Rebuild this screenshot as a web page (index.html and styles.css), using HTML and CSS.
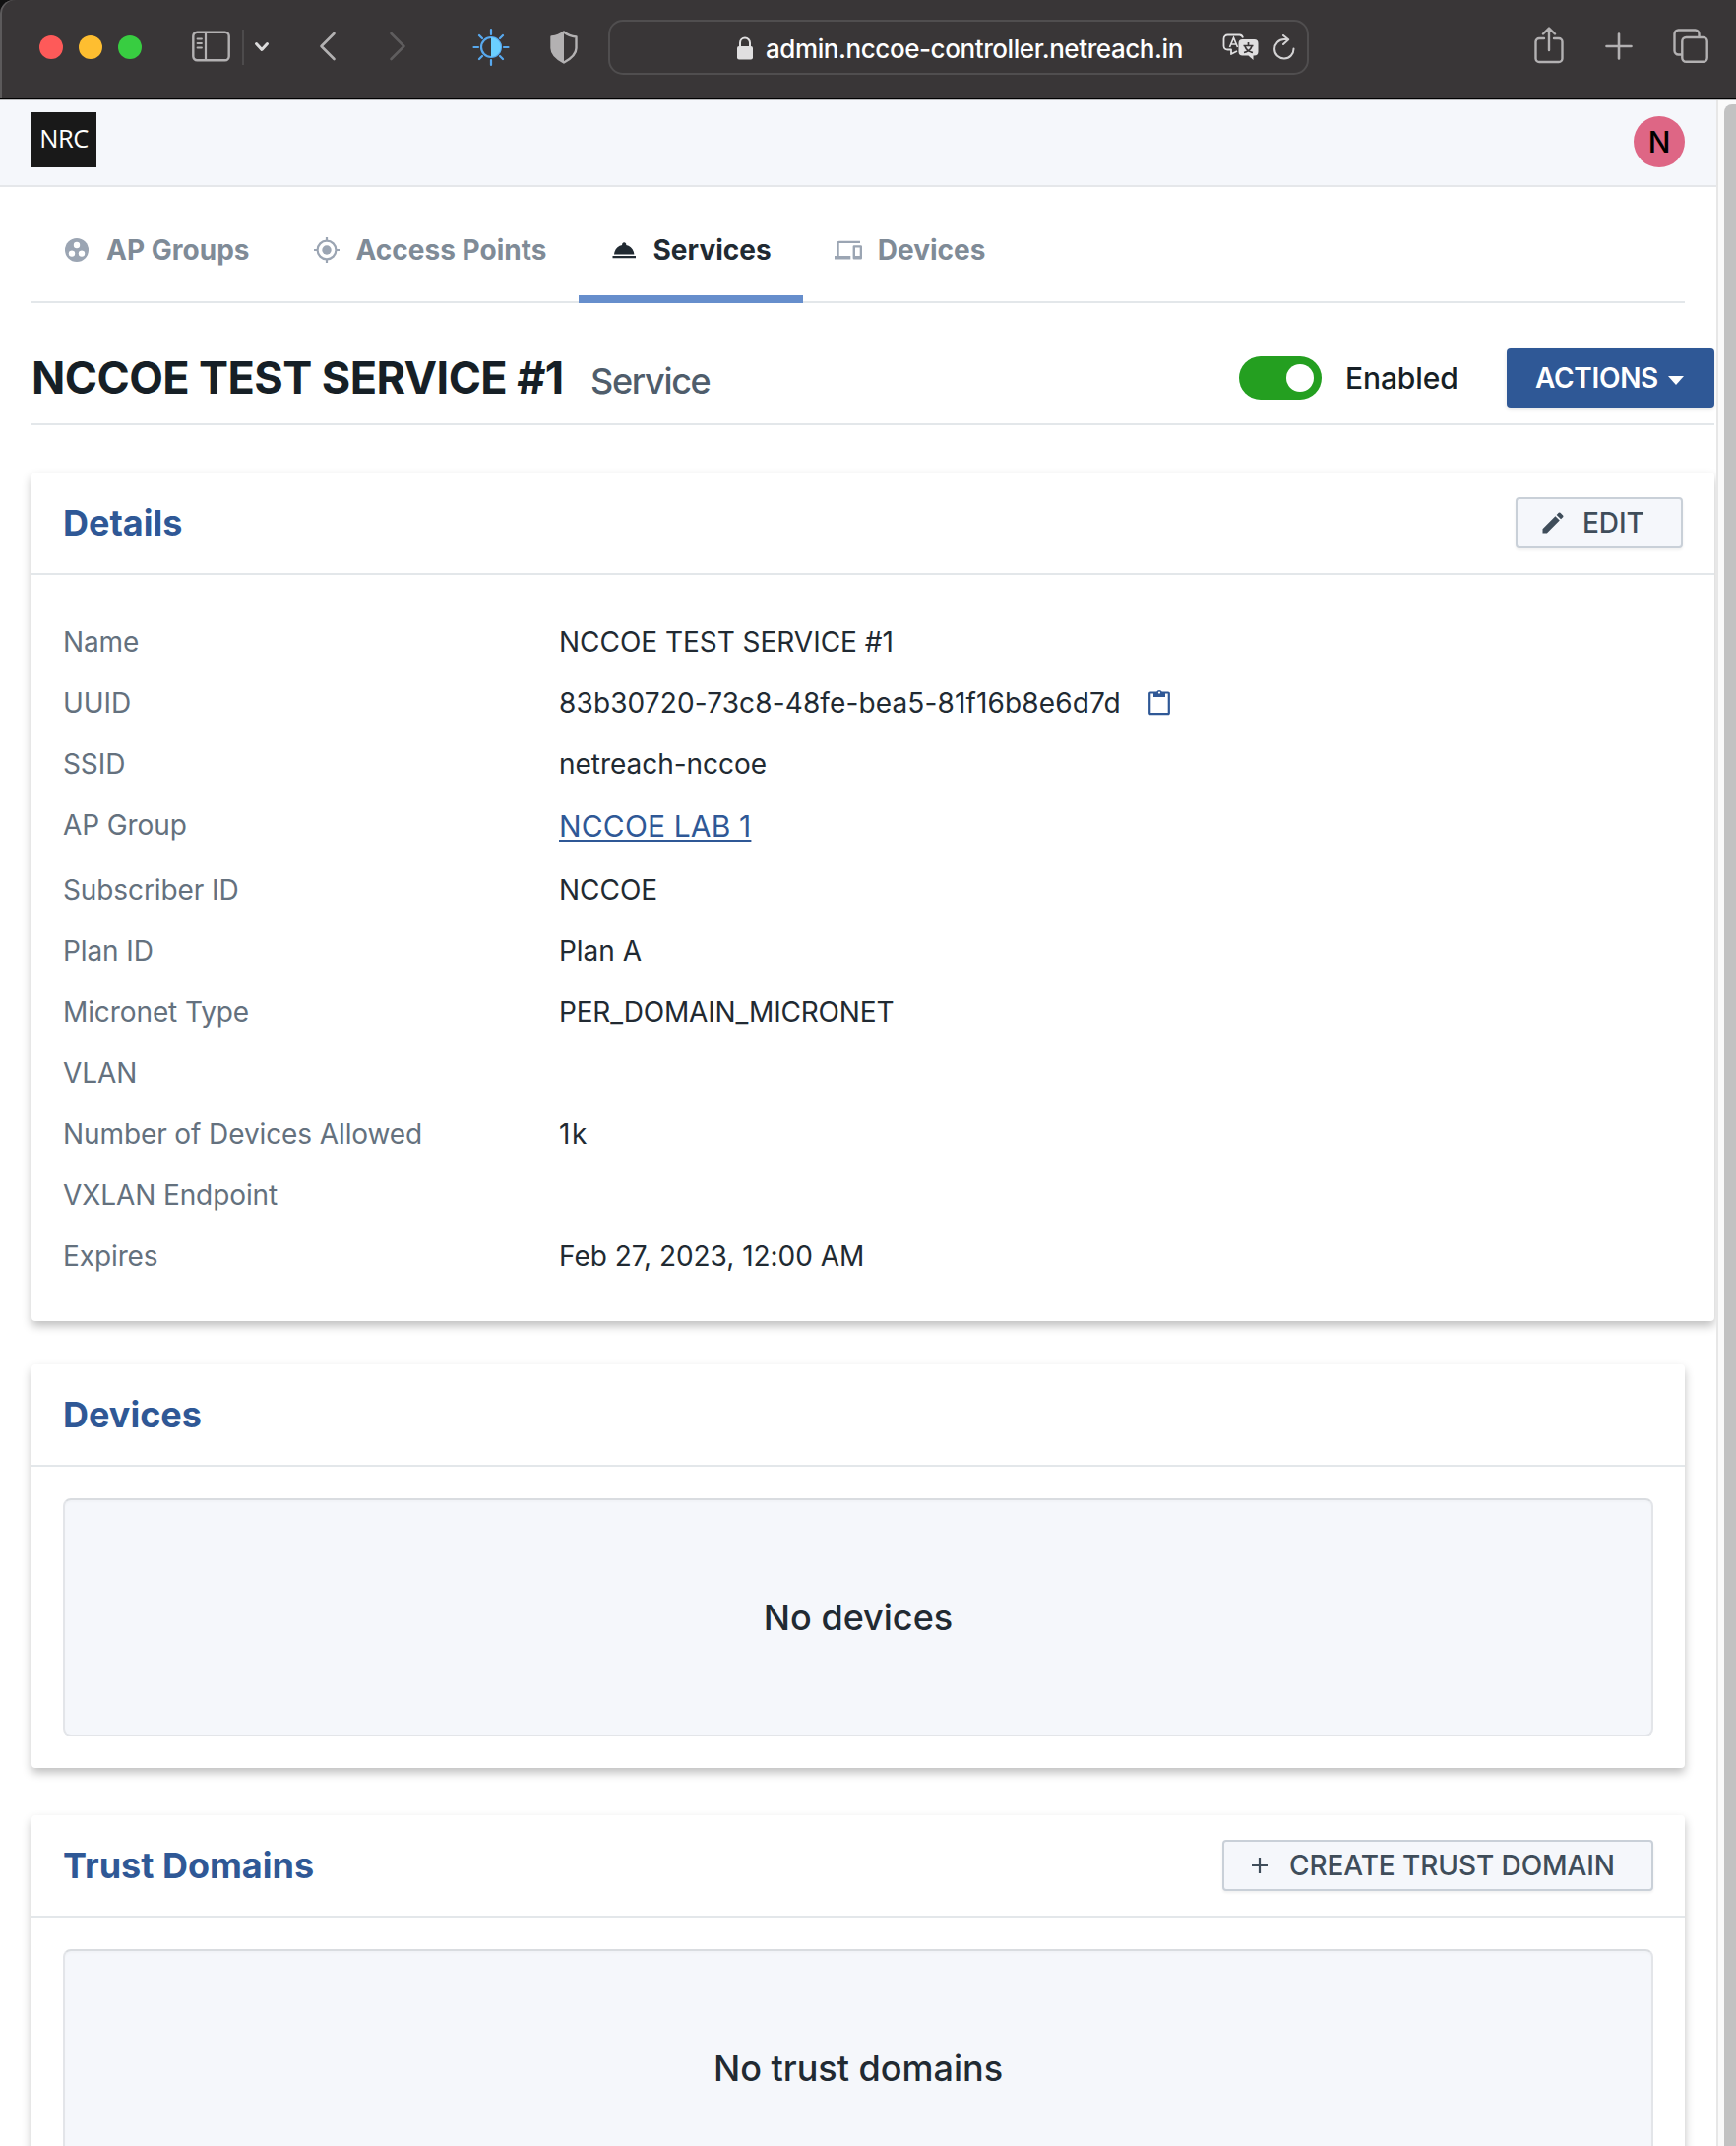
FILE: index.html
```html
<!DOCTYPE html>
<html lang="en">
<head>
<meta charset="utf-8">
<title>NCCOE TEST SERVICE #1</title>
<link rel="stylesheet" href="styles.css">
</head>
<body>
<div class="window">
  <header class="toolbar">
    <div class="lights"><span class="light light-close"></span><span class="light light-min"></span><span class="light light-max"></span></div>
    <svg class="ic-sidebar" width="40" height="32" viewBox="0 0 40 32" fill="none" stroke="#b3b1b2"><rect x="1.3" y="1.8" width="36.4" height="28.4" rx="4" stroke-width="2.4"/><path d="M14 2v28" stroke-width="2.2"/><path d="M5.5 8.500h4.500M5.500 13h4.500M5.500 17.500h4.500" stroke-width="1.800" stroke-linecap="round"/></svg>
    <span class="divider"></span>
    <svg class="ic-drop" width="16" height="12" viewBox="0 0 16 12" fill="none" stroke="#dddcdc" stroke-width="3" stroke-linecap="round" stroke-linejoin="round"><path d="M2.500 2.500L8 8.500l5.500-6"/></svg>
    <svg class="ic-back" width="18" height="30" viewBox="0 0 18 30" fill="none" stroke="#b3b1b2" stroke-width="2.600" stroke-linecap="round" stroke-linejoin="round"><path d="M15.500 2L2.500 15l13 13"/></svg>
    <svg class="ic-fwd" width="18" height="30" viewBox="0 0 18 30" fill="none" stroke="#5f5d5e" stroke-width="2.600" stroke-linecap="round" stroke-linejoin="round"><path d="M2.500 2l13 13-13 13"/></svg>
    <svg class="ic-sun" width="38" height="40" viewBox="0 0 38 40" fill="none" stroke="#58a9ee" stroke-width="2.200" stroke-linecap="round"><circle cx="19" cy="20" r="10"/><path d="M19 10a10 10 0 0 1 0 20z" fill="#6bcfff" stroke="none"/><path d="M19 2v5M19 33v5M1.500 20h4.500M32 20h4.500M7 8l3 3M31 8l-3 3M7 32l3-3M31 32l-3-3"/></svg>
    <svg class="ic-shield" width="28" height="34" viewBox="0 0 28 34"><path d="M14 1.500C11 4 6 6 1.500 6.500V18c0 7 6 11 12.500 14.500C20.500 29 26.500 25 26.500 18V6.500C22 6 17 4 14 1.500z" fill="none" stroke="#b3b1b2" stroke-width="2.400" stroke-linejoin="round"/><path d="M14 1.500C11 4 6 6 1.500 6.500V18c0 7 6 11 12.500 14.500z" fill="#b3b1b2"/></svg>
    <div class="address">
      <svg class="ic-lock" width="16" height="24" viewBox="0 0 16 24"><rect x="0" y="10" width="16" height="13.500" rx="2" fill="#e0dfe0"/><path d="M3 11V6.500a5 5 0 0 1 10 0V11" fill="none" stroke="#e0dfe0" stroke-width="2"/></svg>
      <span class="url">admin.nccoe-controller.netreach.in</span>
      <svg class="ic-translate" width="38" height="28" viewBox="0 0 38 28"><path d="M15 18l-6 3v-4.500H5.500A4 4 0 0 1 1.500 13V5.500a4 4 0 0 1 4-4h12a4 4 0 0 1 3.500 3" fill="none" stroke="#e0dfe0" stroke-width="1.800" stroke-linejoin="round"/><path d="M7.500 14L11.500 4.500l4 9.500M9 11h5" fill="none" stroke="#e0dfe0" stroke-width="1.700"/><path d="M20.500 6h12a4 4 0 0 1 4 4v8.500a4 4 0 0 1-4 4h-1V27l-5-4.500h-6a4 4 0 0 1-4-4V10a4 4 0 0 1 4-4z" fill="#e0dfe0"/><path d="M26.500 9v3M21.500 12.500h10M23 13c1 3 4 5.500 8 6.500M30 13c-1 3-4 5.500-8 6.500" fill="none" stroke="#393637" stroke-width="1.700"/></svg>
      <svg class="ic-reload" width="22" height="26" viewBox="0 0 22 26" fill="none" stroke="#d4d3d4" stroke-width="2" stroke-linecap="round" stroke-linejoin="round"><path d="M20.500 14.500a9.700 9.700 0 1 1-9.700-9.400h3.500M10 1l5.200 4.300L10 10"/></svg>
    </div>
    <svg class="ic-share" width="30" height="38" viewBox="0 0 30 38" fill="none" stroke="#b3b1b2" stroke-width="2.400" stroke-linecap="round" stroke-linejoin="round"><path d="M10 12H5a3.500 3.500 0 0 0-3.500 3.500v17A3.500 3.500 0 0 0 5 36h20a3.500 3.500 0 0 0 3.500-3.500v-17A3.500 3.500 0 0 0 25 12h-5M15 24V2M9 7.500L15 1.500l6 6"/></svg>
    <svg class="ic-plus" width="28" height="28" viewBox="0 0 28 28" stroke="#b3b1b2" stroke-width="2.600" stroke-linecap="round"><path d="M14 1.500v25M1.500 14h25"/></svg>
    <svg class="ic-tabs" width="36" height="36" viewBox="0 0 36 36" fill="none" stroke="#b3b1b2" stroke-width="2.400"><rect x="9.300" y="9" width="25.400" height="24.800" rx="4"/><path d="M9 26.500H5.500a4 4 0 0 1-4-4v-17a4 4 0 0 1 4-4h17a4 4 0 0 1 4 4V9"/></svg>
  </header>
  <div class="viewport">
    <div class="page">
      <div class="appbar">
        <div class="logo">NRC</div>
        <div class="avatar">N</div>
      </div>
      <nav class="tabs">
        <a class="tab"><svg width="28" height="28" viewBox="0 0 28 28"><circle cx="14" cy="14" r="12" fill="#9ba5b3"/><circle cx="14" cy="9" r="3.200" fill="#fff"/><circle cx="9" cy="17.600" r="3.200" fill="#fff"/><circle cx="19" cy="17.600" r="3.200" fill="#fff"/></svg><span>AP Groups</span></a>
        <a class="tab"><svg width="28" height="28" viewBox="0 0 28 28"><circle cx="14" cy="14" r="9.400" fill="none" stroke="#9ba5b3" stroke-width="2.200"/><circle cx="14" cy="14" r="4.700" fill="#9ba5b3"/><path d="M14 1v4M14 23v4M1 14h4M23 14h4" stroke="#9ba5b3" stroke-width="2.200"/></svg><span>Access Points</span></a>
        <a class="tab tab-active"><svg width="28" height="28" viewBox="0 0 28 28" fill="#212a32"><path d="M2.500 20h23.500v2.200H2.500zM4 18.400c.5-5 4-8.600 8.200-9.300a2.100 2.100 0 1 1 4 0c4.200.7 7.700 4.300 8.200 9.300z"/></svg><span>Services</span></a>
        <a class="tab"><svg width="28" height="28" viewBox="0 0 28 28" fill="#9ba5b3"><path d="M4.700 7h21.300V4.700H4.700A2.300 2.300 0 0 0 2.400 7v13H0v3.400h16.300V20H4.700zM26.800 9.300h-7a1.200 1.200 0 0 0-1.200 1.200v11.700a1.200 1.200 0 0 0 1.200 1.200h7a1.200 1.200 0 0 0 1.200-1.200V10.500a1.200 1.200 0 0 0-1.200-1.200zM25.700 20h-4.700v-8.400h4.700z"/></svg><span>Devices</span></a>
      </nav>
      <div class="heading">
        <h1>NCCOE TEST SERVICE #1</h1>
        <span class="kind">Service</span>
        <span class="toggle"><span class="knob"></span></span>
        <span class="state">Enabled</span>
        <button class="btn-primary"><span>ACTIONS</span><span class="caret"></span></button>
      </div>
      <section class="card card-details">
        <div class="card-head"><h2>Details</h2><button class="btn btn-edit"><svg width="28" height="28" viewBox="0 0 24 24" fill="#3f4d5a"><path d="M3 17.250V21h3.750L17.810 9.940l-3.750-3.750L3 17.250zM20.710 7.040a1 1 0 0 0 0-1.410l-2.340-2.340a1 1 0 0 0-1.410 0l-1.830 1.830 3.750 3.750 1.830-1.830z"/></svg><span>EDIT</span></button></div>
        <dl class="details">
          <dt>Name</dt><dd>NCCOE TEST SERVICE #1</dd>
          <dt>UUID</dt><dd><span class="uuid">83b30720-73c8-48fe-bea5-81f16b8e6d7d</span><svg class="copy" width="24" height="28" viewBox="0 0 24 28"><path d="M3 4.500h18a.800.800 0 0 1 .800.800v20a.800.800 0 0 1-.8.800H3a.800.800 0 0 1-.8-.8v-20a.800.800 0 0 1 .8-.8z" fill="none" stroke="#2f5896" stroke-width="2.200"/><path d="M6 4h3.200a3 3 0 0 1 5.600 0H18v5H6z" fill="#2f5896"/><circle cx="12" cy="4.600" r="1.100" fill="#fff"/></svg></dd>
          <dt>SSID</dt><dd>netreach-nccoe</dd>
          <dt class="tall">AP Group</dt><dd class="tall"><a class="link">NCCOE LAB 1</a></dd>
          <dt>Subscriber ID</dt><dd>NCCOE</dd>
          <dt>Plan ID</dt><dd>Plan A</dd>
          <dt>Micronet Type</dt><dd class="enum">PER_DOMAIN_MICRONET</dd>
          <dt>VLAN</dt><dd></dd>
          <dt>Number of Devices Allowed</dt><dd class="count">1k</dd>
          <dt>VXLAN Endpoint</dt><dd></dd>
          <dt>Expires</dt><dd>Feb 27, 2023, 12:00 AM</dd>
        </dl>
      </section>
      <section class="card card-devices">
        <div class="card-head"><h2>Devices</h2></div>
        <div class="empty">No devices</div>
      </section>
      <section class="card">
        <div class="card-head"><h2>Trust Domains</h2><button class="btn btn-create"><svg width="18" height="18" viewBox="0 0 18 18" stroke="#3f4d5a" stroke-width="2.200"><path d="M9 1v16M1 9h16"/></svg><span>CREATE TRUST DOMAIN</span></button></div>
        <div class="empty">No trust domains</div>
      </section>
    </div>
    <div class="scrollbar"><div class="thumb"></div></div>
  </div>
</div>
</body>
</html>
```
FILE: styles.css
```css
* { box-sizing: border-box; }
html, body { margin: 0; height: 100%; overflow: hidden; }
body { font-family: Inter, "Liberation Sans", sans-serif; font-size: 28px; color: #212a32; background: #fff; }
svg { display: block; flex: none; }
h1, h2, dl, dd { margin: 0; }
.window { height: 2180px; display: flex; flex-direction: column; overflow: hidden; background: linear-gradient(#111 0 60px, #fff 60px); }

/* browser toolbar */
.toolbar { height: 102px; flex: none; display: flex; align-items: flex-start; background: #393637; border-bottom: 1px solid #b9babc; box-shadow: inset 0 -1px #000, inset 2px 0 #5c5a5b; border-top-left-radius: 14px; }
.lights { display: flex; gap: 16px; margin: 36px 0 0 40px; }
.light { width: 24px; height: 24px; border-radius: 50%; }
.light-close { background: #fe5a59; }
.light-min { background: #febe30; }
.light-max { background: #38cd41; }
.ic-sidebar { margin: 31px 0 0 51px; }
.divider { width: 2px; height: 36px; margin: 30px 0 0 11px; background: #4d4b4c; }
.ic-drop { margin: 42px 0 0 10px; }
.ic-back { margin: 32px 0 0 50px; }
.ic-fwd { margin: 32px 0 0 53px; }
.ic-sun { margin: 28px 0 0 67px; }
.ic-shield { margin: 31px 0 0 41px; }
.address { width: 712px; height: 56px; margin: 20px 0 0 31px; border: 2px solid #504e4f; border-radius: 15px; display: flex; align-items: center; }
.ic-lock { margin: 2px 0 0 129px; }
.url { width: 424px; margin: 2px 0 0 13px; font-size: 26px; font-weight: 500; letter-spacing: -.42px; color: #fff; white-space: nowrap; }
.ic-translate { margin-left: 40px; }
.ic-reload { margin-left: 14px; }
.ic-share { margin: 27px 0 0 229px; }
.ic-plus { margin: 33px 0 0 42px; }
.ic-tabs { margin: 29px 0 0 41px; }

/* page area and scrollbar */
.viewport { flex: 1; min-height: 0; display: flex; }
.page { width: 1744px; flex: none; overflow: hidden; background: #fff; }
.scrollbar { flex: 1; display: flex; justify-content: flex-end; padding-top: 4px; background: #fafafa; border-left: 2px solid #e7e7e7; }
.thumb { width: 12px; background: #c2c2c2; border-top-left-radius: 8px; }

.appbar { height: 88px; padding: 12px 32px 0; display: flex; justify-content: space-between; background: #f5f7fb; border-bottom: 2px solid #e5e7ea; }
.logo { width: 66px; height: 56px; background: #191919; color: #fff; font: 25.5px/52px "Open Sans", "Noto Sans", sans-serif; letter-spacing: -.5px; text-align: center; }
.avatar { width: 52px; height: 52px; margin-top: 4px; border-radius: 50%; background: #de6685; color: #000; font-size: 30px; font-weight: 550; line-height: 52px; text-align: center; }

.tabs { width: 1680px; height: 118px; margin-left: 32px; display: flex; border-bottom: 2px solid #e3e7ea; }
.tab { height: 118px; padding: 17px 32px 0; display: flex; align-items: center; gap: 16px; border-bottom: 8px solid transparent; font-weight: 700; letter-spacing: .02px; color: #7f8b97; white-space: nowrap; }
.tab-active { color: #212a32; border-bottom-color: #668ecc; }

.heading { width: 1710px; height: 124px; margin-left: 32px; display: flex; align-items: flex-start; border-bottom: 2px solid #e3e7ea; white-space: nowrap; }
h1 { width: 568px; margin-top: 48px; font-size: 45px; line-height: 56px; font-weight: 700; letter-spacing: -.57px; color: #161f26; }
.kind { width: 659px; margin-top: 55px; font-size: 36px; line-height: 48px; letter-spacing: -1.3px; font-weight: 450; color: #4f5d6b; }
.toggle { width: 84px; height: 44px; margin-top: 54px; padding: 8px; border-radius: 22px; background: #249f20; display: flex; justify-content: flex-end; }
.knob { width: 28px; height: 28px; border-radius: 50%; background: #fff; }
.state { width: 164px; margin: 56px 0 0 24px; font-size: 30px; line-height: 40px; font-weight: 500; letter-spacing: -.1px; color: #161f26; }
.btn-primary { width: 211px; height: 60px; margin-top: 46px; padding: 0 0 0 29px; display: flex; align-items: center; gap: 10px; border: 0; border-radius: 4px; background: #2f5896; color: #fff; font: 600 28px Inter, sans-serif; letter-spacing: -.3px; box-shadow: 0 2px 4px rgba(0,0,0,.1); }
.caret { border: 8px solid transparent; border-top: 9px solid #fff; border-bottom: 0; margin-top: 5px; }

.card { width: 1680px; margin-left: 32px; border-radius: 4px; background: #fff; box-shadow: 0 5px 10px rgba(0,0,0,.25); }
.card-details { width: 1710px; height: 862px; margin: 48px 0 44px 32px; }
.card-devices { height: 410px; margin-bottom: 48px; }
.card-head { height: 104px; padding: 0 32px; display: flex; align-items: center; justify-content: space-between; border-bottom: 2px solid #e3e7ea; }
h2 { font-size: 36px; line-height: 48px; font-weight: 700; color: #2f5896; }
.btn { height: 52px; padding: 0; display: flex; align-items: center; border: 2px solid #c9d0d8; border-radius: 4px; background: #f5f7fb; color: #3f4d5a; font: 500 28px Inter, sans-serif; letter-spacing: -.08px; box-shadow: 0 2px 3px rgba(0,0,0,.06); white-space: nowrap; }
.btn-edit { width: 170px; padding-left: 22px; gap: 16px; }
.btn-create { width: 438px; padding-left: 27px; gap: 21px; }
.details { padding-top: 37px; display: grid; grid-template-columns: 504px 1fr; margin-left: 32px; line-height: 62px; }
.details dt { color: #64717e; height: 62px; letter-spacing: -.1px; }
.details dd { height: 62px; display: flex; align-items: center; white-space: nowrap; letter-spacing: -.03px; }
.details .tall { height: 66px; }
.details .enum { letter-spacing: -.18px; }
.details .count { letter-spacing: 1.5px; }
.details .uuid { letter-spacing: .13px; }
.link { margin-bottom: 2px; font-size: 30px; letter-spacing: .15px; color: #2f5896; text-decoration: underline; text-decoration-thickness: 2px; text-underline-offset: 3px; }
.copy { margin-left: 27px; margin-bottom: 3px; }
.empty { height: 242px; margin: 32px 32px 0; display: flex; align-items: center; justify-content: center; border: 2px solid #e3e5e9; border-top-color: #d9dce0; border-radius: 8px; background: #f5f7fb; box-shadow: inset 0 2px 2px rgba(0,0,0,.02); font-size: 36px; font-weight: 500; }
```
